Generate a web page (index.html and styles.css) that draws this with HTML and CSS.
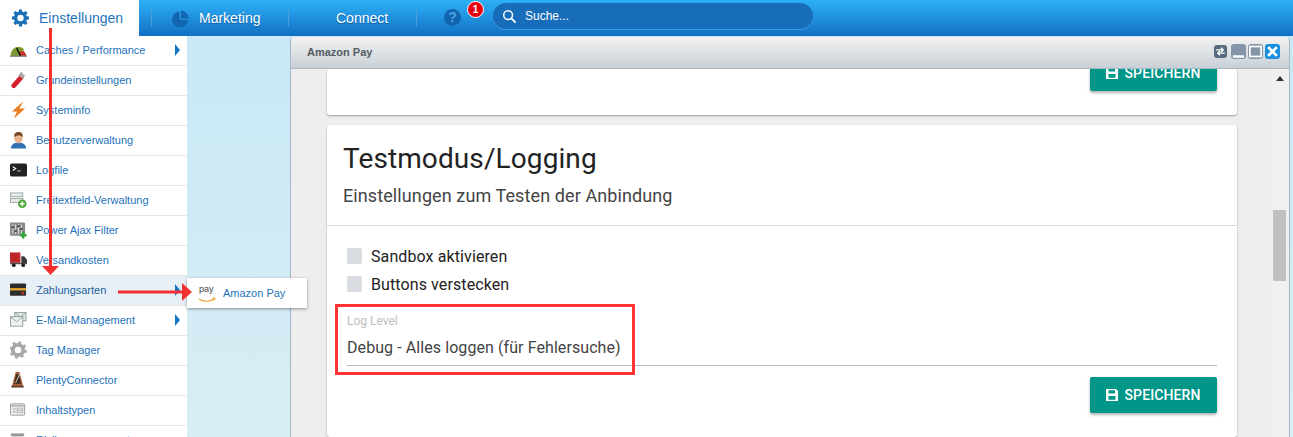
FILE: index.html
```html
<!DOCTYPE html>
<html lang="de">
<head>
    <meta charset="UTF-8">
    <meta name="viewport" content="width=device-width, initial-scale=1.0">
    <title>Amazon Pay</title>
    <link rel="stylesheet" href="styles.css">
</head>
<body>
    <header class="topbar">
        <div class="tab-active">
            <svg class="tab-gear" viewBox="0 0 24 24"><path fill="#1a6fb5" fill-rule="evenodd" d="M10 1h4l.6 3.200 1.800.8L19.100 3 22 5.900l-2 2.700.8 1.800L24 11v4l-3.200.6-.8 1.800 2 2.700-2.900 2.900-2.700-2-1.800.8L14 25h-4l-.6-3.200-1.800-.8-2.700 2L2 20.100l2-2.700-.8-1.800L0 15v-4l3.200-.6.8-1.800-2-2.700L4.900 3l2.700 2 1.800-.8zM12 8.500a4.500 4.500 0 1 0 0 9 4.500 4.500 0 0 0 0-9z" transform="translate(0 -1)"/></svg>
            <span>Einstellungen</span>
        </div>
        <div class="nav-item nav-marketing">
            <svg class="pie" viewBox="0 0 17 17"><path fill="#1266b0" d="M7.500 1.500v8.500H16A8 8 0 1 1 7.500 1.500z"/><path fill="#1266b0" d="M9 0.500a8 8 0 0 1 7.500 8H9z"/></svg>
            <span>Marketing</span>
        </div>
        <div class="nav-item nav-connect"><span>Connect</span></div>
        <div class="nav-end"></div>
        <div class="help">
            <div class="help-circle">?</div>
            <div class="badge">1</div>
        </div>
        <div class="search">
            <svg class="search-icon" viewBox="0 0 16 16"><circle cx="6.500" cy="6.500" r="4.700" fill="none" stroke="#fff" stroke-width="1.600"/><path d="M10 10l4.500 4.500" stroke="#fff" stroke-width="2"/></svg>
            <span>Suche...</span>
        </div>
    </header>

    <div class="workspace">
        <nav class="sidebar">
            <div class="menu-row has-sub">
                <svg class="menu-icon" viewBox="0 0 18 18"><path fill="#7b9a2e" d="M0.500 15a8.500 9.500 0 0 1 9-9.500V15z"/><path fill="#c8352b" d="M9.500 9a8 8 0 0 1 8 6h-8z"/><path fill="#7b9a2e" d="M9.500 5.500a8.500 9.500 0 0 1 6 3.500l-6 2z"/><path fill="#4a4a3a" d="M0 15h18v1H0z"/><path d="M7 7l4 8" stroke="#111" stroke-width="1.500"/></svg>
                <span>Caches / Performance</span>
            </div>
            <div class="menu-row">
                <svg class="menu-icon" viewBox="0 0 18 18"><path d="M4 15L12 6" stroke="#d3202a" stroke-width="5" stroke-linecap="round"/><path d="M11 6l3-4" stroke="#aaa" stroke-width="5.500"/><circle cx="15" cy="2" r="1.500" fill="#fff"/></svg>
                <span>Grundeinstellungen</span>
            </div>
            <div class="menu-row">
                <svg class="menu-icon" viewBox="0 0 18 18"><path fill="#ec7d1e" d="M14 0L2 10.500h5.500L4 18 16 7.500H10z"/></svg>
                <span>Systeminfo</span>
            </div>
            <div class="menu-row">
                <svg class="menu-icon" viewBox="0 0 18 18"><path fill="#2f6fb2" d="M1 18c0-4 3-6 8-6s8 2 8 6z"/><ellipse cx="9" cy="7" rx="4.500" ry="5.500" fill="#e8b48f"/><path fill="#7a4a28" d="M4.500 6C4 2 6 0.500 9 0.500S14 2 13.500 6C12 4 7 3.500 4.500 6z"/></svg>
                <span>Benutzerverwaltung</span>
            </div>
            <div class="menu-row">
                <svg class="menu-icon" viewBox="0 0 18 18"><rect y="2" width="18" height="14" rx="2" fill="#222"/><path d="M3 5.500l3 2-3 2" fill="none" stroke="#fff" stroke-width="1.200"/><path d="M7.500 10h4" stroke="#aaa" stroke-width="1.200"/></svg>
                <span>Logfile</span>
            </div>
            <div class="menu-row">
                <svg class="menu-icon" viewBox="0 0 18 18"><rect x="0.500" y="1.500" width="13" height="4" fill="#e8ecea" stroke="#9aa8a4"/><rect x="0.500" y="7.500" width="13" height="4" fill="#e8ecea" stroke="#9aa8a4"/><circle cx="13" cy="13" r="4.500" fill="#4ea838"/><path d="M10.500 13h5M13 10.500v5" stroke="#fff" stroke-width="1.500"/></svg>
                <span>Freitextfeld-Verwaltung</span>
            </div>
            <div class="menu-row">
                <svg class="menu-icon" viewBox="0 0 18 18"><rect y="1" width="16" height="14" rx="1" fill="#8a8a8a"/><path d="M3 3v10M6 3v10M9 3v10M12 3v10" stroke="#e4e4e4"/><path d="M2 6h2M5 10h2M8 5h2M11 8h2" stroke="#222" stroke-width="1.500"/><path d="M14 11v7M10.500 14.500h7" stroke="#35a635" stroke-width="2.500"/></svg>
                <span>Power Ajax Filter</span>
            </div>
            <div class="menu-row">
                <svg class="menu-icon" viewBox="0 0 18 18"><rect y="1" width="11" height="11" fill="#c0252a"/><path fill="#3a3a3a" d="M12 5h3l3 4v4H12z"/><rect y="12" width="18" height="1.500" fill="#555"/><circle cx="4" cy="14.500" r="2" fill="#222"/><circle cx="14" cy="14.500" r="2" fill="#222"/></svg>
                <span>Versandkosten</span>
            </div>
            <div class="menu-row is-active has-sub">
                <svg class="menu-icon" viewBox="0 0 18 18"><rect y="2" width="17" height="13" rx="1" fill="#2c2c2c"/><rect y="7" width="17" height="2.500" fill="#e3a72f"/><circle cx="13.500" cy="12.300" r="1.500" fill="#c8352b"/></svg>
                <span>Zahlungsarten</span>
            </div>
            <div class="menu-row has-sub">
                <svg class="menu-icon" viewBox="0 0 18 18"><rect x="5" y="1" width="12" height="9" fill="#dfe8e4" stroke="#8fa39c"/><path d="M5 1l6 5 6-5" fill="none" stroke="#8fa39c"/><rect x="0.500" y="5.500" width="13" height="10" fill="#eef3f0" stroke="#8fa39c"/><path d="M0.500 5.500L7 11l6.500-5.500" fill="none" stroke="#8fa39c"/></svg>
                <span>E-Mail-Management</span>
            </div>
            <div class="menu-row">
                <svg class="menu-icon" viewBox="0 0 18 18"><circle cx="8.500" cy="9" r="5.500" fill="none" stroke="#a8a8a8" stroke-width="4"/><circle cx="8.500" cy="9" r="8" fill="none" stroke="#a8a8a8" stroke-width="2.500" stroke-dasharray="3 3.300"/></svg>
                <span>Tag Manager</span>
            </div>
            <div class="menu-row">
                <svg class="menu-icon" viewBox="0 0 18 18"><path fill="#a6603a" d="M6 0.500h4l4 15H2z"/><path fill="#3a2a20" d="M6.500 3h3l2 10h-7z"/><path d="M10 3L6 12" stroke="#e8d8c0"/><rect x="1.500" y="15" width="13" height="2" fill="#6b3d22"/></svg>
                <span>PlentyConnector</span>
            </div>
            <div class="menu-row">
                <svg class="menu-icon" viewBox="0 0 18 18"><rect x="0.500" y="2.500" width="15" height="12" rx="1" fill="#eee" stroke="#999"/><path d="M1 4.500h14" stroke="#bbb" stroke-width="2"/><path d="M3 8h3M3 11h3" stroke="#999"/><rect x="7.500" y="7" width="6" height="2" fill="#fff" stroke="#999" stroke-width="0.700"/><rect x="7.500" y="10" width="6" height="2" fill="#fff" stroke="#999" stroke-width="0.700"/></svg>
                <span>Inhaltstypen</span>
            </div>
            <div class="menu-row">
                <svg class="menu-icon" viewBox="0 0 18 18"><rect x="1" y="2" width="14" height="3" fill="#999"/><rect x="3" y="5" width="10" height="10" fill="#ccc"/></svg>
                <span>Risikomanagement</span>
            </div>
        </nav>

        <main class="desktop">
            <div class="window">
                <div class="window-title">
                    <span>Amazon Pay</span>
                    <div class="window-buttons">
                        <div class="win-btn win-reload">
                            <svg viewBox="0 0 12 12"><path d="M2 4.500h6M6.500 2.500l2 2-2 2M10 7.500H4M5.500 5.500l-2 2 2 2" fill="none" stroke="#fff" stroke-width="1.300"/></svg>
                        </div>
                        <div class="win-btn"><svg viewBox="0 0 12 12"><path d="M1.500 10h9" stroke="#fff" stroke-width="2"/></svg></div>
                        <div class="win-btn"><svg viewBox="0 0 12 12"><rect x="1.500" y="2" width="9" height="8" fill="none" stroke="#fff" stroke-width="1.400"/></svg></div>
                        <div class="win-btn win-close"><svg viewBox="0 0 12 12"><path d="M2.500 2.500l7 7M9.500 2.500l-7 7" stroke="#fff" stroke-width="2.200"/></svg></div>
                    </div>
                </div>
                <div class="window-body">
                    <div class="content">
                        <section class="card card-top">
                            <div class="card-actions">
                                <button class="save-btn">
                                    <svg viewBox="0 0 14 14"><path fill="#fff" fill-rule="evenodd" d="M1 1h10l2 2v10H1zM3.500 2.200v3.300h6.500V2.200zM3.500 8v3.800h7V8z"/></svg>
                                    SPEICHERN
                                </button>
                            </div>
                        </section>
                        <section class="card">
                            <div class="card-head">
                                <h2>Testmodus/Logging</h2>
                                <p>Einstellungen zum Testen der Anbindung</p>
                            </div>
                            <div class="card-body">
                                <label class="check-row"><span class="check-box"></span>Sandbox aktivieren</label>
                                <label class="check-row"><span class="check-box"></span>Buttons verstecken</label>
                                <div class="select-field">
                                    <div class="select-label">Log Level</div>
                                    <div class="select-value">Debug - Alles loggen (für Fehlersuche)</div>
                                </div>
                                <div class="card-actions">
                                    <button class="save-btn">
                                        <svg viewBox="0 0 14 14"><path fill="#fff" fill-rule="evenodd" d="M1 1h10l2 2v10H1zM3.500 2.200v3.300h6.500V2.200zM3.500 8v3.800h7V8z"/></svg>
                                        SPEICHERN
                                    </button>
                                </div>
                            </div>
                        </section>
                    </div>
                    <div class="scrollbar">
                        <div class="scroll-up"></div>
                        <div class="scroll-thumb"></div>
                    </div>
                </div>
            </div>
            <div class="flyout">
                <svg class="pay-logo" viewBox="0 0 20 16"><path d="M2 12c4 3 11 3 15 0" fill="none" stroke="#f0a030" stroke-width="1.200"/><path d="M15.500 11l2.500 0-.8 2.500" fill="none" stroke="#f0a030"/></svg>
                <span class="pay-word">pay</span>
                <span>Amazon Pay</span>
            </div>
        </main>
    </div>

    <!-- annotations drawn on top of the screenshot -->
    <svg class="marks" viewBox="0 0 1293 437">
        <path d="M50.500 28V267" stroke="#f23030" stroke-width="3"/>
        <path d="M42 266h17l-8.500 9z" fill="#f23030"/>
        <path d="M118 292H183" stroke="#f23030" stroke-width="3"/>
        <path d="M182 283v18l10-9z" fill="#f23030"/>
    </svg>
    <div class="mark-box"></div>
</body>
</html>
```

FILE: styles.css
```css
/* Basic page */
html, body {
    height: 100%;
}
body {
    margin: 0;
    display: flex;
    flex-direction: column;
    overflow: hidden;
    font-family: "Liberation Sans", Arial, sans-serif;
    background-color: #cbe9f4;
}

/* Top bar */
.topbar {
    height: 36px;
    flex: none;
    display: flex;
    align-items: center;
    color: #fff;
    font-size: 14px;
    background: linear-gradient(#2db1f6, #1270c4);
    box-shadow: 0 1px 1px #b5c4cc;
}
.tab-active {
    width: 139px;
    height: 36px;
    box-sizing: border-box;
    padding-left: 12px;
    display: flex;
    align-items: center;
    gap: 10px;
    background-color: #fff;
    color: #1f74bd;
}
.tab-gear {
    width: 17px;
    height: 18px;
}
.nav-item {
    height: 18px;
    display: flex;
    align-items: center;
    box-sizing: border-box;
    border-left: 1px solid #4a9fdc;
    text-shadow: 0 1px 1px #0d5a9e;
}
.nav-marketing {
    margin-left: 12px;
    width: 137px;
    padding-left: 20px;
    gap: 10px;
}
.pie {
    width: 17px;
    height: 17px;
}
.nav-connect {
    width: 128px;
    padding-left: 47px;
}
.nav-end {
    height: 18px;
    border-left: 1px solid #4a9fdc;
}
.help {
    position: relative;
    margin-left: 27px;
    width: 49px;
    height: 18px;
}
.help-circle {
    width: 17px;
    height: 17px;
    border-radius: 50%;
    background-color: #1266b0;
    color: #4aa3e2;
    font-size: 14px;
    font-weight: bold;
    line-height: 17px;
    text-align: center;
}
.badge {
    position: absolute;
    left: 23px;
    top: -8px;
    width: 15px;
    height: 15px;
    border: 1px solid #fff;
    border-radius: 50%;
    background-color: #e8000f;
    font-size: 10px;
    font-weight: bold;
    line-height: 15px;
    text-align: center;
}
.search {
    width: 320px;
    height: 26px;
    margin-top: -4px;
    box-sizing: border-box;
    padding-left: 9px;
    display: flex;
    align-items: center;
    gap: 8px;
    border-radius: 13px;
    background-color: #176db9;
    box-shadow: 0 1px 0 #3f9ce0;
    font-size: 12px;
}
.search-icon {
    width: 15px;
    height: 15px;
}

/* Main split */
.workspace {
    flex: 1;
    min-height: 0;
    display: flex;
}
.sidebar {
    width: 187px;
    flex: none;
    background-color: #fff;
    overflow: hidden;
}
.menu-row {
    position: relative;
    height: 30px;
    box-sizing: border-box;
    padding: 0 0 1px 10px;
    display: flex;
    align-items: center;
    gap: 9px;
    border-bottom: 1px solid #e6e6e6;
    color: #2573bb;
    font-size: 11px;
}
.menu-row.is-active {
    background-color: #e8f0f7;
    color: #1c5f9d;
}
.menu-icon {
    width: 17px;
    height: 18px;
    flex: none;
}
.has-sub::after {
    content: "";
    position: absolute;
    left: 175px;
    top: 8px;
    border-left: 5px solid #0f74c4;
    border-top: 6px solid transparent;
    border-bottom: 6px solid transparent;
}

/* Desktop with the module window */
.desktop {
    position: relative;
    flex: 1;
    min-width: 0;
    padding: 1px 3px 0 103px;
    display: flex;
    background: linear-gradient(#c8e9f5, #d9edf5);
}
.window {
    flex: 1;
    min-width: 0;
    display: flex;
    flex-direction: column;
    border-left: 1px solid #a5b6c6;
    border-right: 1px solid #a5b6c6;
    border-radius: 4px 4px 0 0;
    overflow: hidden;
}
.window-title {
    height: 32px;
    flex: none;
    box-sizing: border-box;
    padding: 0 9px 2px 16px;
    display: flex;
    align-items: center;
    justify-content: space-between;
    background: linear-gradient(#f2f2f2, #c8d0d6);
    border-bottom: 1px solid #a8b8c5;
    color: #555c63;
    font-size: 11px;
    font-weight: bold;
}
.window-buttons {
    display: flex;
    gap: 2px;
}
.win-btn {
    width: 15px;
    height: 15px;
    border-radius: 3px;
    background-color: #8496a8;
}
.win-btn svg {
    display: block;
}
.win-reload {
    width: 13px;
    height: 13px;
    margin: 1px 2px 0 0;
    background-color: #566a80;
}
.win-close {
    background-color: #1b8fe0;
}
.window-body {
    flex: 1;
    min-height: 0;
    display: flex;
    background-color: #eee;
}
.content {
    flex: 1;
    min-width: 0;
    box-sizing: border-box;
    padding: 0 34px 0 36px;
    overflow: hidden;
    font-family: Roboto, "Liberation Sans", sans-serif;
}
.scrollbar {
    width: 18px;
    flex: none;
    background-color: #f0f0f0;
}
.scroll-up {
    width: 0;
    margin: 7px auto 0;
    border-left: 4px solid transparent;
    border-right: 4px solid transparent;
    border-bottom: 5px solid #333;
}
.scroll-thumb {
    width: 13px;
    height: 71px;
    margin: 129px 0 0 2px;
    background-color: #c0c0c0;
}

/* Cards */
.card {
    margin-bottom: 10px;
    background-color: #fff;
    border-radius: 3px;
    box-shadow: 0 1px 2px rgba(0, 0, 0, 0.35);
}
.card-top {
    height: 46px;
    padding: 0 20px 24px;
    box-sizing: border-box;
    display: flex;
    flex-direction: column;
    justify-content: flex-end;
    overflow: hidden;
}
.card-head {
    height: 101px;
    box-sizing: border-box;
    padding: 16px 16px 0;
    border-bottom: 1px solid #ddd;
}
.card-head h2 {
    margin: 0;
    font-size: 28px;
    font-weight: 400;
    letter-spacing: 0.1px;
    line-height: 36px;
    color: #222;
}
.card-head p {
    margin: 9px 0 0;
    font-size: 18px;
    letter-spacing: 0.1px;
    line-height: 20px;
    color: #444;
}
.card-body {
    padding: 16px 20px 24px;
}
.check-row {
    height: 28px;
    display: flex;
    align-items: center;
    gap: 9px;
    font-size: 16px;
    letter-spacing: 0.1px;
    color: #222;
}
.check-box {
    width: 15px;
    height: 16px;
    border-radius: 2px;
    background-color: #d9dde2;
}
.select-field {
    margin-top: 9px;
    height: 59px;
    box-sizing: border-box;
    padding-top: 7px;
    border-bottom: 1px solid #bbb;
}
.select-label {
    font-size: 12px;
    line-height: 14px;
    color: #bdbdbd;
}
.select-value {
    margin-top: 10px;
    font-size: 16px;
    letter-spacing: 0.08px;
    line-height: 20px;
    color: #444;
}
.card-actions {
    display: flex;
    justify-content: flex-end;
}
.card-body .card-actions {
    margin-top: 11px;
}
.save-btn {
    width: 127px;
    height: 36px;
    flex: none;
    padding: 0 2px 0 0;
    display: flex;
    align-items: center;
    justify-content: center;
    gap: 6px;
    border: 0;
    border-radius: 2px;
    background-color: #009688;
    box-shadow: 0 2px 3px rgba(0, 0, 0, 0.3);
    color: #fff;
    font-family: Roboto, "Liberation Sans", sans-serif;
    font-size: 14px;
    font-weight: 500;
    letter-spacing: 0.1px;
}
.save-btn svg {
    width: 14px;
    height: 14px;
}

/* Submenu next to the sidebar */
.flyout {
    position: absolute;
    left: 0;
    top: 242px;
    width: 120px;
    height: 30px;
    box-sizing: border-box;
    padding-left: 36px;
    display: flex;
    align-items: center;
    background-color: #fff;
    box-shadow: 0 1px 3px rgba(0, 0, 0, 0.4);
    color: #2573bb;
    font-size: 11px;
}
.pay-logo {
    position: absolute;
    left: 10px;
    top: 9px;
    width: 20px;
    height: 16px;
}
.pay-word {
    position: absolute;
    left: 12px;
    top: 6px;
    color: #444;
    font-size: 9px;
}

/* Red annotations */
.marks {
    position: absolute;
    left: 0;
    top: 0;
    width: 1293px;
    height: 437px;
    pointer-events: none;
}
.mark-box {
    position: absolute;
    left: 335px;
    top: 304px;
    width: 294px;
    height: 65px;
    border: 3px solid #f33;
}
```
